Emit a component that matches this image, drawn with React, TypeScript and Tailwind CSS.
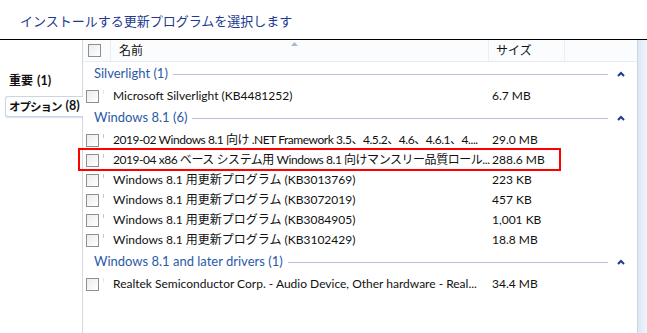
import React from 'react';

type Item = { name: string; size: string; mark?: string; tight?: boolean };
type Group = { title: string; items: Item[] };

const groups: Group[] = [
  {
    title: 'Silverlight (1)',
    items: [{ name: 'Microsoft Silverlight (KB4481252)', size: '6.7 MB', mark: 'bg-[#f3e7a8]' }],
  },
  {
    title: 'Windows 8.1 (6)',
    items: [
      { name: '2019-02 Windows 8.1 向け .NET Framework 3.5、4.5.2、4.6、4.6.1、4....', size: '29.0 MB', tight: true },
      { name: '2019-04 x86 ベース システム用 Windows 8.1 向けマンスリー品質ロール...', size: '288.6 MB', tight: true },
      { name: 'Windows 8.1 用更新プログラム (KB3013769)', size: '223 KB' },
      { name: 'Windows 8.1 用更新プログラム (KB3072019)', size: '457 KB' },
      { name: 'Windows 8.1 用更新プログラム (KB3084905)', size: '1,001 KB' },
      { name: 'Windows 8.1 用更新プログラム (KB3102429)', size: '18.8 MB' },
    ],
  },
  {
    title: 'Windows 8.1 and later drivers (1)',
    items: [
      { name: 'Realtek Semiconductor Corp. - Audio Device, Other hardware - Real...', size: '34.4 MB', mark: 'bg-[#f3e7a8]' },
    ],
  },
];

const Check: React.FC = () => (
  <div className="w-[13px] h-[13px] border border-[#8e8f8f] bg-gradient-to-br from-[#ececec] to-white shrink-0" />
);

const Chevron: React.FC = () => (
  <svg width="8" height="6" viewBox="0 0 8 6" className="shrink-0">
    <path d="M1 5 L4 2 L7 5" stroke="#1e3c8c" strokeWidth="2" fill="none" />
  </svg>
);

const GroupRow: React.FC<{ title: string }> = ({ title }) => (
  <div className="h-[24px] flex items-center pl-[11px] pr-[12px]">
    <span className="text-[#2a5aa8] text-[13px] whitespace-nowrap">{title}</span>
    <div className="flex-1 h-px bg-[#b7c2d8] ml-[5px] mr-[9px]" />
    <Chevron />
  </div>
);

const ItemRow: React.FC<{ item: Item }> = ({ item }) => (
  <div className="h-[20px] grid grid-cols-[30px_379px_1fr] items-center text-[#111]">
    <div className="flex items-center pl-[3px] h-full">
      <Check />
      <div className={`w-px h-[4px] ml-[4px] self-start mt-[4px] ${item.mark ?? 'bg-[#c8c8c8]'}`} />
    </div>
    <div className={`min-w-0 whitespace-nowrap overflow-hidden ${item.tight ? 'tracking-[-0.45px]' : ''}`}>
      {item.name}
    </div>
    <div className="whitespace-nowrap">{item.size}</div>
  </div>
);

export default function App() {
  return (
    <div
      className="relative w-[647px] h-[333px] bg-white overflow-hidden flex flex-col text-[12px]"
      style={{ fontFamily: 'Lato, "Noto Sans CJK JP", sans-serif' }}
    >
      <div className="h-[40px] shrink-0 border-b border-black pl-[20px] pt-[11px]">
        <span className="text-[#1e3a8f] text-[13px]" style={{ fontFamily: '"Noto Sans CJK JP", sans-serif' }}>
          インストールする更新プログラムを選択します
        </span>
      </div>

      <div className="flex flex-1 min-h-0">
        {/* left category tabs */}
        <div className="w-[83px] shrink-0 border-r border-[#d5d9df] pt-[30px] text-[12.5px] font-bold text-[#111] whitespace-nowrap">
          <div className="h-[22px] flex items-center pl-[9px]">
            <span className="text-[12px]">重要</span>
            <span className="ml-[4px]">(1)</span>
          </div>
          <div className="ml-[5px] mt-[4px] -mr-px h-[21px] flex items-center pl-[3px] border border-r-0 border-[#c9d6e6] rounded-l-[3px] bg-white shadow-[0_1px_1px_rgba(160,180,210,0.4)]">
            <span className="tracking-[-1px] text-[11.5px]">オプション</span>
            <span className="ml-[4px]">(8)</span>
          </div>
        </div>

        {/* update list */}
        <div className="flex-1 flex flex-col">
          <div className="relative h-[22px] flex items-center bg-[#fbfcfd] border-b border-[#e6ebf1] text-[#111]">
            <div className="w-[22px] h-full flex items-center pl-[5px] border-r border-[#eaeef3] box-content">
              <Check />
            </div>
            <div className="w-[378px] h-full flex items-center pl-[8px] border-r border-[#eaeef3]">名前</div>
            <div className="w-[76px] h-full flex items-center pl-[7px] border-r border-[#eaeef3]">サイズ</div>
            <svg width="7" height="4" viewBox="0 0 7 4" className="absolute left-[208px] top-[2px]">
              <path d="M0 4 L3.5 0 L7 4 Z" fill="#a7bad2" />
            </svg>
          </div>
          {groups.map((g) => (
            <div key={g.title}>
              <GroupRow title={g.title} />
              {g.items.map((it) => (
                <ItemRow key={it.name} item={it} />
              ))}
            </div>
          ))}
        </div>

        {/* scrollbar edge */}
        <div className="w-[10px] shrink-0 border-l border-[#cfd4db] bg-gradient-to-r from-[#dce8f6] to-[#eef4fb]" />
      </div>

      {/* red highlight annotation */}
      <div className="absolute left-[78px] top-[148px] w-[483px] h-[23px] border-2 border-[#ff0000]" />
    </div>
  );
}
